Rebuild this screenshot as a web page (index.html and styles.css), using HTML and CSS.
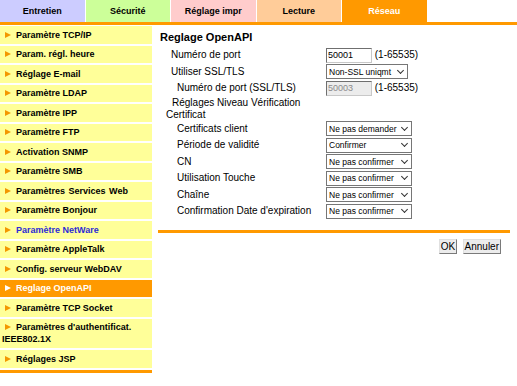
FILE: index.html
```html
<!DOCTYPE html>
<html>
<head>
	<meta charset="UTF-8">
	<title>Reglage OpenAPI</title>
	<link rel="stylesheet" href="styles.css">
</head>
<body>
	<div class="tabs">
		<div class="tab tab_entretien">Entretien</div>
		<div class="tab tab_securite">Sécurité</div>
		<div class="tab tab_impr">Réglage impr</div>
		<div class="tab tab_lecture">Lecture</div>
		<div class="tab tab_reseau">Réseau</div>
	</div>
	<div class="page">
		<ul class="menu">
			<li class="menu_item">Paramètre TCP/IP</li>
			<li class="menu_item">Param. régl. heure</li>
			<li class="menu_item">Réglage E-mail</li>
			<li class="menu_item">Paramètre LDAP</li>
			<li class="menu_item">Paramètre IPP</li>
			<li class="menu_item">Paramètre FTP</li>
			<li class="menu_item">Activation SNMP</li>
			<li class="menu_item">Paramètre SMB</li>
			<li class="menu_item menu_wide">Paramètres Services Web</li>
			<li class="menu_item">Paramètre Bonjour</li>
			<li class="menu_item menu_link">Paramètre NetWare</li>
			<li class="menu_item">Paramètre AppleTalk</li>
			<li class="menu_item">Config. serveur WebDAV</li>
			<li class="menu_item menu_active">Reglage OpenAPI</li>
			<li class="menu_item">Paramètre TCP Socket</li>
			<li class="menu_item">Paramètres d'authentificat. IEEE802.1X</li>
			<li class="menu_item">Réglages JSP</li>
		</ul>
		<div class="main">
			<h1 class="titre">Reglage OpenAPI</h1>
			<table class="form">
				<colgroup>
					<col class="col_lbl">
					<col class="col_val">
				</colgroup>
				<tr>
					<td class="lbl lvl1">Numéro de port</td>
					<td><input type="text" class="champ" value="50001"> (1-65535)</td>
				</tr>
				<tr>
					<td class="lbl lvl1">Utiliser SSL/TLS</td>
					<td>
						<span class="choix_box choix_ssl"><select class="choix">
							<option>Non-SSL uniqmt</option>
						</select></span>
					</td>
				</tr>
				<tr>
					<td class="lbl lvl2">Numéro de port (SSL/TLS)</td>
					<td><input type="text" class="champ" value="50003" disabled> (1-65535)</td>
				</tr>
				<tr class="row_double">
					<td class="lbl"><span class="retrait">Réglages Niveau Vérification</span> Certificat</td>
					<td></td>
				</tr>
				<tr>
					<td class="lbl lvl2">Certificats client</td>
					<td>
						<span class="choix_box"><select class="choix">
							<option>Ne pas demander</option>
						</select></span>
					</td>
				</tr>
				<tr>
					<td class="lbl lvl2">Période de validité</td>
					<td>
						<span class="choix_box"><select class="choix">
							<option>Confirmer</option>
						</select></span>
					</td>
				</tr>
				<tr>
					<td class="lbl lvl2">CN</td>
					<td>
						<span class="choix_box"><select class="choix">
							<option>Ne pas confirmer</option>
						</select></span>
					</td>
				</tr>
				<tr>
					<td class="lbl lvl2">Utilisation Touche</td>
					<td>
						<span class="choix_box"><select class="choix">
							<option>Ne pas confirmer</option>
						</select></span>
					</td>
				</tr>
				<tr>
					<td class="lbl lvl2">Chaîne</td>
					<td>
						<span class="choix_box"><select class="choix">
							<option>Ne pas confirmer</option>
						</select></span>
					</td>
				</tr>
				<tr>
					<td class="lbl lvl2">Confirmation Date d'expiration</td>
					<td>
						<span class="choix_box"><select class="choix">
							<option>Ne pas confirmer</option>
						</select></span>
					</td>
				</tr>
			</table>
			<div class="actions">
				<input type="button" class="btn" value="OK">
				<input type="button" class="btn" value="Annuler">
			</div>
		</div>
	</div>
</body>
</html>
```

FILE: styles.css
```css
body
{
	margin: 0;
	background-color: #fff;
	font-family: "Liberation Sans", Arial, sans-serif;
	color: #000;
}
.tabs
{
	display: flex;
	height: 22px;
	border-bottom: 3px solid #ff9900;
	margin-bottom: 1px;
}
.tab
{
	width: 84.5px;
	margin-right: 1px;
	font-size: 9px;
	font-weight: bold;
	line-height: 22px;
	text-align: center;
}
.tab_entretien
{
	background-color: #ccccff;
}
.tab_securite
{
	background-color: #ccff99;
}
.tab_impr
{
	background-color: #ffcccc;
}
.tab_lecture
{
	background-color: #ffcc99;
}
.tab_reseau
{
	background-color: #ff9900;
	color: #fff;
}
.page
{
	display: flex;
	align-items: flex-start;
}
.menu
{
	width: 152px;
	margin: 0;
	padding: 0 0 2px 0;
	list-style: none;
	border-bottom: 3px solid #ff9900;
	flex-shrink: 0;
}
.menu_item
{
	background-color: #ffff99;
	font-size: 9px;
	font-weight: bold;
	line-height: 12px;
	padding: 2.75px 0 2.75px 2px;
	margin-bottom: 2px;
}
.menu_item:last-child
{
	margin-bottom: 0;
}
.menu_item::before
{
	content: "";
	display: inline-block;
	border-left: 6px solid #f39800;
	border-top: 3.5px solid transparent;
	border-bottom: 3.5px solid transparent;
	margin: 0 5px 0 3px;
}
.menu_wide
{
	word-spacing: 1px;
}
.menu_link
{
	color: #2b2bd6;
}
.menu_active
{
	background-color: #ff9900;
	color: #fff;
}
.menu_active::before
{
	border-left-color: #fff;
}
.main
{
	width: 352px;
	margin-left: 6px;
}
.titre
{
	margin: 0;
	padding: 5px 0 3px 2px;
	font-size: 11px;
	line-height: 13px;
}
.form
{
	margin-left: 8px;
	width: 250px;
	table-layout: fixed;
	border-collapse: collapse;
	font-size: 10px;
}
.col_lbl
{
	width: 160px;
}
.col_val
{
	width: 90px;
}
.form td
{
	padding: 0;
	height: 16.5px;
	line-height: 12px;
	vertical-align: middle;
	white-space: nowrap;
}
.lvl1
{
	padding-left: 5px !important;
}
.lvl2
{
	padding-left: 11px !important;
}
.form .row_double td
{
	height: 24px;
	white-space: normal;
}
.retrait
{
	padding-left: 6px;
}
.champ
{
	box-sizing: border-box;
	width: 46px;
	height: 15px;
	padding: 0 1px;
	font-family: "Liberation Sans", Arial, sans-serif;
	font-size: 9px;
	border: 1px solid;
	border-color: #6f6f6f #c8c8c8 #c8c8c8 #6f6f6f;
	vertical-align: middle;
}
.champ:disabled
{
	background-color: #ececec;
	color: #8a8a8a;
}
.choix_box
{
	position: relative;
	display: inline-block;
	width: 86px;
	height: 15px;
	vertical-align: middle;
}
.choix_ssl
{
	width: 82px;
}
.choix_box::after
{
	content: "";
	position: absolute;
	right: 5px;
	top: 3.5px;
	width: 4px;
	height: 4px;
	border-right: 1.2px solid #333;
	border-bottom: 1.2px solid #333;
	transform: rotate(45deg);
	pointer-events: none;
}
.choix
{
	-webkit-appearance: none;
	appearance: none;
	box-sizing: border-box;
	width: 100%;
	height: 15px;
	margin: 0;
	padding: 0 0 0 2px;
	font-family: "Liberation Sans", Arial, sans-serif;
	font-size: 8.5px;
	color: #000;
	background-color: #fff;
	border: 1px solid #767676;
	border-radius: 0;
	display: block;
}
.actions
{
	margin-top: 10px;
	border-top: 3px solid #ff9900;
	padding: 3px 9px 0 0;
	text-align: right;
}
.btn
{
	height: 15px;
	padding: 0 1px;
	font-family: "Liberation Sans", Arial, sans-serif;
	font-size: 10px;
	background-color: #ececec;
	border: 1px solid;
	border-color: #e0e0e0 #7a7a7a #7a7a7a #e0e0e0;
	margin-left: 1px;
}
```
